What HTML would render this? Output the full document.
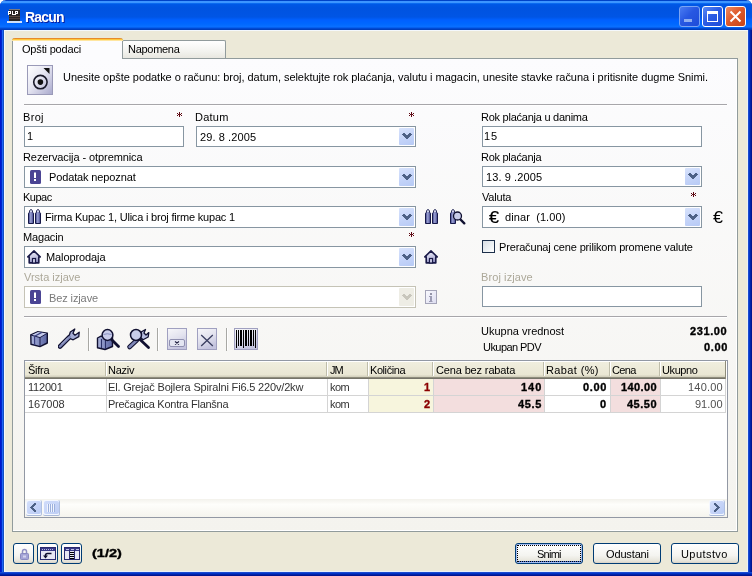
<!DOCTYPE html>
<html><head><meta charset="utf-8">
<style>
*{margin:0;padding:0;box-sizing:border-box}
html,body{width:752px;height:576px;overflow:hidden;background:#fff}
body{font-family:"Liberation Sans",sans-serif;font-size:11px;color:#000;position:relative}
.a{position:absolute}
.t{position:absolute;white-space:nowrap;line-height:13px;will-change:transform}
#win{position:absolute;left:0;top:0;width:752px;height:576px;border-radius:6px 6px 0 0;
 background:linear-gradient(90deg,#0018CF 0,#0018CF 1px,#0028C8 1px,#0028C8 2px,#1E64F8 2px,#1E64F8 3px,#1450C0 3px,#1450C0 4px,transparent 4px,transparent 748px,#1A4AD0 748px,#1A4AD0 749px,#0035C8 749px,#0035C8 750px,#0022A8 750px,#0022A8 751px,#001490 751px)}
#bot{position:absolute;left:0;top:572px;width:752px;height:4px;background:linear-gradient(#1A4AD0 0,#1A4AD0 1px,#0035C8 1px,#0035C8 2px,#0022A8 2px,#0022A8 3px,#001490 3px)}
#title{position:absolute;left:0;top:0;width:752px;height:30px;border-radius:6px 6px 0 0;
 background:linear-gradient(#0042C8 0px,#0042C8 1px,#3D95FF 1px,#3D95FF 3px,#0A6AF0 3px,#0A6AF0 4px,#0058E6 4px,#0053E0 8px,#0055E5 17px,#0060FF 20px,#0068FF 24px,#0A70FF 27px,#0050E0 28px,#0038B0 30px)}
#client{position:absolute;left:4px;top:30px;width:744px;height:542px;background:#ECE9D8;border:1px solid #F4F8FC;border-right-color:#E8F0F8;border-bottom-color:#E8F0F8}
.tb{position:absolute;top:6px;width:21px;height:21px;border:1px solid #fff;border-radius:3px}
.inp{position:absolute;height:21px;border:1px solid #8796A2;background:#fff}
.c22{height:22px}
.dis{border-color:#C5C3B6;background:#fff}
.ast{position:absolute;color:#800000;font-size:13px;font-weight:bold;line-height:13px}
.dd{position:absolute;right:1px;top:1px;width:15px;height:17px;border-radius:1px;
 background:linear-gradient(160deg,#D8E3FC,#C6D5F9 50%,#B7CAF5)}
.c22 .dd{height:18px}
.dd svg{position:absolute;left:3px;top:5px}
.c22 .dd svg{top:6px}
.ico{position:absolute}
.tbtn{position:absolute;top:543px;width:21px;height:21px;border:1px solid #003C74;border-radius:3px;background:linear-gradient(#FFFFFF,#F4F4F0 60%,#E6E4DA 90%,#D6D0C5)}
.btn{position:absolute;top:543px;height:21px;border:1px solid #003C74;border-radius:3px;background:linear-gradient(#FFFFFF,#F4F4F0 60%,#E6E4DA 90%,#D6D0C5)}
</style></head><body>
<svg width="0" height="0" style="position:absolute"><defs>
<linearGradient id="gcyl" x1="0" y1="0" x2="1" y2="0"><stop offset="0" stop-color="#3A3E88"/><stop offset="0.45" stop-color="#9EA4D4"/><stop offset="1" stop-color="#3A3E88"/></linearGradient>
<linearGradient id="ghouse" x1="0" y1="0" x2="0.3" y2="1"><stop offset="0" stop-color="#F4F4FC"/><stop offset="0.6" stop-color="#C8C8E4"/><stop offset="1" stop-color="#9090C0"/></linearGradient>
</defs></svg>
<div id="win"></div>
<div id="title"></div>
<div id="bot"></div>
<!-- title icon -->
<svg class="ico" style="left:7px;top:8px" width="15" height="15" shape-rendering="crispEdges">
 <rect x="2" y="1" width="11" height="12" fill="#2A2624"/>
 <rect x="2" y="1" width="11" height="1" fill="#7A7A80"/>
 <rect x="2" y="8" width="11" height="1" fill="#5A4A40"/><rect x="2" y="10" width="11" height="1" fill="#4A3E38"/>
 <g fill="#FFFFFF"><rect x="1" y="3" width="1" height="1"/><rect x="2" y="3" width="1" height="1"/><rect x="3" y="3" width="1" height="1"/><rect x="1" y="4" width="1" height="1"/><rect x="3" y="4" width="1" height="1"/><rect x="1" y="5" width="1" height="1"/><rect x="2" y="5" width="1" height="1"/><rect x="3" y="5" width="1" height="1"/><rect x="1" y="6" width="1" height="1"/><rect x="4.5" y="3" width="1" height="1"/><rect x="4.5" y="4" width="1" height="1"/><rect x="4.5" y="5" width="1" height="1"/><rect x="4.5" y="6" width="1" height="1"/><rect x="5.5" y="6" width="1" height="1"/><rect x="6.5" y="6" width="1" height="1"/><rect x="8" y="3" width="1" height="1"/><rect x="9" y="3" width="1" height="1"/><rect x="10" y="3" width="1" height="1"/><rect x="8" y="4" width="1" height="1"/><rect x="10" y="4" width="1" height="1"/><rect x="8" y="5" width="1" height="1"/><rect x="9" y="5" width="1" height="1"/><rect x="10" y="5" width="1" height="1"/><rect x="8" y="6" width="1" height="1"/></g>
 <rect x="0" y="13" width="15" height="2" fill="#D0E0F8"/>
</svg>
<!-- title buttons -->
<div class="tb" style="left:679px;border-color:#7AA4F4;background:linear-gradient(135deg,#4A7CF2,#2858E2 45%,#1E4CD8)"></div>
<div class="a" style="left:684px;top:19px;width:8px;height:3px;background:#8FAEF0"></div>
<div class="tb" style="left:702px;background:linear-gradient(135deg,#5A8AF6,#2C5CE4 45%,#1E4CD8)"></div>
<div class="a" style="left:707px;top:11px;width:11px;height:11px;border:1px solid #fff;border-top-width:3px"></div>
<div class="tb" style="left:725px;background:linear-gradient(135deg,#EE8A62,#DE5A2C 45%,#C84418)"></div>
<svg class="a" style="left:725px;top:6px" width="21" height="21"><path d="M5.5 5.5 L15.5 15.5 M15.5 5.5 L5.5 15.5" stroke="#fff" stroke-width="2"/></svg>
<div id="client"></div>
<!-- tab page -->
<div class="a" style="left:12px;top:58px;width:726px;height:474px;border:1px solid #919B9C;background:linear-gradient(#FCFCFE,#F4F3EE)"></div>
<div class="a" style="left:736px;top:59px;width:1px;height:472px;background:#fff"></div>
<div class="a" style="left:13px;top:530px;width:724px;height:1px;background:#fff"></div>
<!-- tabs -->
<div class="a" style="left:122px;top:40px;width:104px;height:18px;border:1px solid #919B9C;border-bottom:none;background:linear-gradient(#FFFFFF,#F3F3EF 60%,#E8E7E0);border-radius:2px 2px 0 0"></div>
<div class="a" style="left:12px;top:38px;width:111px;height:21px;border:1px solid #919B9C;border-bottom:none;border-top:none;background:#FCFCFE;border-radius:3px 3px 0 0"></div>
<div class="a" style="left:12px;top:38px;width:111px;height:3px;background:linear-gradient(#E68B2C 0,#E68B2C 1px,#FFC73C 1px,#FFC73C 2px,#FFE6A0 2px);border-radius:3px 3px 0 0"></div>

<!-- info icon -->
<svg class="ico" style="left:27px;top:65px" width="26" height="30">
 <defs><linearGradient id="gi" x1="0" y1="0" x2="1" y2="1"><stop offset="0" stop-color="#FFFFFF"/><stop offset="0.45" stop-color="#E6E6F2"/><stop offset="1" stop-color="#A8A8CC"/></linearGradient></defs>
 <rect x="0.5" y="0.5" width="25" height="29" fill="url(#gi)" stroke="#9A9AB8"/>
 <path d="M16.5 3 L22.5 3 L22.5 9 Z" fill="#111"/>
 <circle cx="13.4" cy="17.1" r="6.7" fill="none" stroke="#1A1A2A" stroke-width="1.6"/>
 <circle cx="13.4" cy="17.1" r="2.8" fill="#111"/>
</svg>
<div class="a" style="left:24px;top:104px;width:703px;height:1px;background:#A7A6AA"></div>
<div class="a" style="left:24px;top:105px;width:703px;height:1px;background:#FFFFFF"></div>

<!-- row 1 -->
<svg class="ico" style="left:177px;top:112px" width="5" height="5" shape-rendering="crispEdges" fill="#5E0812"><rect x="2" y="0" width="1" height="1"/><rect x="0" y="1" width="1" height="1"/><rect x="2" y="1" width="1" height="1"/><rect x="4" y="1" width="1" height="1"/><rect x="1" y="2" width="1" height="1"/><rect x="2" y="2" width="1" height="1"/><rect x="3" y="2" width="1" height="1"/><rect x="0" y="3" width="1" height="1"/><rect x="2" y="3" width="1" height="1"/><rect x="4" y="3" width="1" height="1"/><rect x="2" y="4" width="1" height="1"/></svg>
<div class="inp" style="left:24px;top:126px;width:160px"></div>
<svg class="ico" style="left:409px;top:112px" width="5" height="5" shape-rendering="crispEdges" fill="#5E0812"><rect x="2" y="0" width="1" height="1"/><rect x="0" y="1" width="1" height="1"/><rect x="2" y="1" width="1" height="1"/><rect x="4" y="1" width="1" height="1"/><rect x="1" y="2" width="1" height="1"/><rect x="2" y="2" width="1" height="1"/><rect x="3" y="2" width="1" height="1"/><rect x="0" y="3" width="1" height="1"/><rect x="2" y="3" width="1" height="1"/><rect x="4" y="3" width="1" height="1"/><rect x="2" y="4" width="1" height="1"/></svg>
<div class="inp" style="left:196px;top:126px;width:220px"><div class="dd"><svg width="10" height="6" shape-rendering="crispEdges" fill="#4D6185"><rect x="1" y="0" width="2" height="1"/><rect x="7" y="0" width="2" height="1"/><rect x="0" y="1" width="4" height="1"/><rect x="6" y="1" width="4" height="1"/><rect x="1" y="2" width="8" height="1"/><rect x="2" y="3" width="6" height="1"/><rect x="3" y="4" width="4" height="1"/><rect x="4" y="5" width="2" height="1"/></svg></div></div>
<div class="inp" style="left:482px;top:126px;width:220px"></div>

<!-- row 2 -->
<div class="inp c22" style="left:24px;top:166px;width:392px"><div class="dd"><svg width="10" height="6" shape-rendering="crispEdges" fill="#4D6185"><rect x="1" y="0" width="2" height="1"/><rect x="7" y="0" width="2" height="1"/><rect x="0" y="1" width="4" height="1"/><rect x="6" y="1" width="4" height="1"/><rect x="1" y="2" width="8" height="1"/><rect x="2" y="3" width="6" height="1"/><rect x="3" y="4" width="4" height="1"/><rect x="4" y="5" width="2" height="1"/></svg></div></div>
<svg class="ico" style="left:30px;top:170px" width="11" height="14"><rect x="0" y="0" width="11" height="14" rx="1.5" fill="#4A4494"/><rect x="4" y="2.5" width="2" height="5.5" fill="#fff"/><rect x="4" y="9" width="2" height="2" fill="#fff"/></svg>
<div class="inp" style="left:482px;top:166px;width:220px"><div class="dd"><svg width="10" height="6" shape-rendering="crispEdges" fill="#4D6185"><rect x="1" y="0" width="2" height="1"/><rect x="7" y="0" width="2" height="1"/><rect x="0" y="1" width="4" height="1"/><rect x="6" y="1" width="4" height="1"/><rect x="1" y="2" width="8" height="1"/><rect x="2" y="3" width="6" height="1"/><rect x="3" y="4" width="4" height="1"/><rect x="4" y="5" width="2" height="1"/></svg></div></div>

<!-- row 3 -->
<div class="inp c22" style="left:24px;top:206px;width:392px"><div class="dd"><svg width="10" height="6" shape-rendering="crispEdges" fill="#4D6185"><rect x="1" y="0" width="2" height="1"/><rect x="7" y="0" width="2" height="1"/><rect x="0" y="1" width="4" height="1"/><rect x="6" y="1" width="4" height="1"/><rect x="1" y="2" width="8" height="1"/><rect x="2" y="3" width="6" height="1"/><rect x="3" y="4" width="4" height="1"/><rect x="4" y="5" width="2" height="1"/></svg></div></div>
<svg class="ico" style="left:28px;top:209px" width="15" height="16"><path d="M1.5 3.2 Q1.5 0.6 3 0.6 Q4.5 0.6 4.5 3.2 L5.5 4.2 L5.5 14.5 L0.5 14.5 L0.5 4.2 Z" fill="url(#gcyl)" stroke="#161848" stroke-width="1"/><circle cx="3" cy="2.2" r="0.9" fill="#E8EAF8"/><path d="M8.5 3.2 Q8.5 0.6 10 0.6 Q11.5 0.6 11.5 3.2 L12.5 4.2 L12.5 14.5 L7.5 14.5 L7.5 4.2 Z" fill="url(#gcyl)" stroke="#161848" stroke-width="1"/><circle cx="10" cy="2.2" r="0.9" fill="#E8EAF8"/></svg>
<svg class="ico" style="left:425px;top:209px" width="15" height="16"><path d="M1.5 3.2 Q1.5 0.6 3 0.6 Q4.5 0.6 4.5 3.2 L5.5 4.2 L5.5 14.5 L0.5 14.5 L0.5 4.2 Z" fill="url(#gcyl)" stroke="#161848" stroke-width="1"/><circle cx="3" cy="2.2" r="0.9" fill="#E8EAF8"/><path d="M8.5 3.2 Q8.5 0.6 10 0.6 Q11.5 0.6 11.5 3.2 L12.5 4.2 L12.5 14.5 L7.5 14.5 L7.5 4.2 Z" fill="url(#gcyl)" stroke="#161848" stroke-width="1"/><circle cx="10" cy="2.2" r="0.9" fill="#E8EAF8"/></svg>
<svg class="ico" style="left:450px;top:209px" width="16" height="16"><path d="M1.5 3.2 Q1.5 0.6 3 0.6 Q4.5 0.6 4.5 3.2 L5.5 4.2 L5.5 14.5 L0.5 14.5 L0.5 4.2 Z" fill="url(#gcyl)" stroke="#161848" stroke-width="1"/><circle cx="3" cy="2.2" r="0.9" fill="#E8EAF8"/><path d="M9.5 9.5 L14.3 14.3" stroke="#101030" stroke-width="2.4" stroke-linecap="round"/><circle cx="7.5" cy="7" r="4" fill="#C8CCEA" stroke="#101030" stroke-width="1.3"/></svg>
<svg class="ico" style="left:691px;top:192px" width="5" height="5" shape-rendering="crispEdges" fill="#5E0812"><rect x="2" y="0" width="1" height="1"/><rect x="0" y="1" width="1" height="1"/><rect x="2" y="1" width="1" height="1"/><rect x="4" y="1" width="1" height="1"/><rect x="1" y="2" width="1" height="1"/><rect x="2" y="2" width="1" height="1"/><rect x="3" y="2" width="1" height="1"/><rect x="0" y="3" width="1" height="1"/><rect x="2" y="3" width="1" height="1"/><rect x="4" y="3" width="1" height="1"/><rect x="2" y="4" width="1" height="1"/></svg>
<div class="inp c22" style="left:482px;top:206px;width:220px"><div class="dd"><svg width="10" height="6" shape-rendering="crispEdges" fill="#4D6185"><rect x="1" y="0" width="2" height="1"/><rect x="7" y="0" width="2" height="1"/><rect x="0" y="1" width="4" height="1"/><rect x="6" y="1" width="4" height="1"/><rect x="1" y="2" width="8" height="1"/><rect x="2" y="3" width="6" height="1"/><rect x="3" y="4" width="4" height="1"/><rect x="4" y="5" width="2" height="1"/></svg></div></div>
<div class="t" style="left:489px;top:210px;font-size:15px;line-height:13px;-webkit-text-stroke:0.2px #000;transform:scale(1.2,1.1);transform-origin:0 0">€</div>
<div class="t" style="left:713px;top:210px;font-size:15px;line-height:13px;transform:scale(1.2,1.1);transform-origin:0 0">€</div>

<!-- row 4 -->
<svg class="ico" style="left:409px;top:232px" width="5" height="5" shape-rendering="crispEdges" fill="#5E0812"><rect x="2" y="0" width="1" height="1"/><rect x="0" y="1" width="1" height="1"/><rect x="2" y="1" width="1" height="1"/><rect x="4" y="1" width="1" height="1"/><rect x="1" y="2" width="1" height="1"/><rect x="2" y="2" width="1" height="1"/><rect x="3" y="2" width="1" height="1"/><rect x="0" y="3" width="1" height="1"/><rect x="2" y="3" width="1" height="1"/><rect x="4" y="3" width="1" height="1"/><rect x="2" y="4" width="1" height="1"/></svg>
<div class="inp c22" style="left:24px;top:246px;width:392px"><div class="dd"><svg width="10" height="6" shape-rendering="crispEdges" fill="#4D6185"><rect x="1" y="0" width="2" height="1"/><rect x="7" y="0" width="2" height="1"/><rect x="0" y="1" width="4" height="1"/><rect x="6" y="1" width="4" height="1"/><rect x="1" y="2" width="8" height="1"/><rect x="2" y="3" width="6" height="1"/><rect x="3" y="4" width="4" height="1"/><rect x="4" y="5" width="2" height="1"/></svg></div></div>
<svg class="ico" style="left:27px;top:250px" width="15" height="15"><path d="M7 0.9 L13.2 6.9 L11.8 6.9 L11.8 12.9 L2.2 12.9 L2.2 6.9 L0.8 6.9 Z" fill="url(#ghouse)" stroke="#1A1A48" stroke-width="1.6" stroke-linejoin="round"/><rect x="5.5" y="8.5" width="3" height="4.5" fill="#D8D8F0" stroke="#1A1A48" stroke-width="1.2"/></svg>
<svg class="ico" style="left:424px;top:250px" width="15" height="15"><path d="M7 0.9 L13.2 6.9 L11.8 6.9 L11.8 12.9 L2.2 12.9 L2.2 6.9 L0.8 6.9 Z" fill="url(#ghouse)" stroke="#1A1A48" stroke-width="1.6" stroke-linejoin="round"/><rect x="5.5" y="8.5" width="3" height="4.5" fill="#D8D8F0" stroke="#1A1A48" stroke-width="1.2"/></svg>
<div class="a" style="left:482px;top:240px;width:13px;height:13px;border:1px solid #1C2F4A;background:linear-gradient(135deg,#D8DEE4,#EEF2F4 60%,#FFFFFF)"></div>

<!-- row 5 -->
<div class="inp c22 dis" style="left:24px;top:286px;width:392px"><div class="dd" style="background:#EEEDE5"><svg width="10" height="6" shape-rendering="crispEdges" fill="#C8C6BC"><rect x="1" y="0" width="2" height="1"/><rect x="7" y="0" width="2" height="1"/><rect x="0" y="1" width="4" height="1"/><rect x="6" y="1" width="4" height="1"/><rect x="1" y="2" width="8" height="1"/><rect x="2" y="3" width="6" height="1"/><rect x="3" y="4" width="4" height="1"/><rect x="4" y="5" width="2" height="1"/></svg></div></div>
<svg class="ico" style="left:30px;top:290px" width="11" height="14"><rect x="0" y="0" width="11" height="14" rx="1.5" fill="#4A4494"/><rect x="4" y="2.5" width="2" height="5.5" fill="#fff"/><rect x="4" y="9" width="2" height="2" fill="#fff"/></svg>
<svg class="ico" style="left:425px;top:290px" width="12" height="14"><defs><linearGradient id="ginf" x1="0" y1="0" x2="1" y2="1"><stop offset="0" stop-color="#FAFAFE"/><stop offset="1" stop-color="#DCDCF0"/></linearGradient></defs><rect x="0.5" y="0.5" width="11" height="13" fill="url(#ginf)" stroke="#A4A4B8"/><rect x="5" y="3" width="2" height="2" fill="#9494A8"/><path d="M4 6h3v5h0.5v1h-3.5v-1h1v-4h-1z" fill="#9C9CB4"/></svg>
<div class="inp" style="left:482px;top:286px;width:220px"></div>

<div class="a" style="left:24px;top:316px;width:703px;height:1px;background:#A7A6AA"></div>
<div class="a" style="left:24px;top:317px;width:703px;height:1px;background:#FFFFFF"></div>

<!-- toolbar -->
<svg class="ico" style="left:30px;top:331px" width="19" height="17">
 <defs><linearGradient id="gbx" x1="0" y1="0" x2="1" y2="0"><stop offset="0" stop-color="#AEB6DC"/><stop offset="0.55" stop-color="#7C86BC"/><stop offset="1" stop-color="#5A64A0"/></linearGradient></defs>
 <path d="M0.8 4 L7.5 0.8 L17.3 2.2 L17.3 12 L10 15.6 L1 13.2 Z" fill="url(#gbx)" stroke="#101030" stroke-width="1.4" stroke-linejoin="round"/>
 <path d="M1.2 4.2 L10 6.6 L17 2.4 L8 1 Z" fill="#C4CAEA"/>
 <path d="M0.8 4 L10 6.6 L17.3 2.2 M10 6.6 L10 15.6" fill="none" stroke="#1A1C48" stroke-width="1"/>
 <path d="M4.6 5.2 L4.6 14.2 M4.6 5.2 L11.8 1.4" fill="none" stroke="#3A4080" stroke-width="1.2"/>
</svg>
<svg class="ico" style="left:58px;top:328px" width="23" height="22">
 <path d="M2 18.5 L11.5 9" stroke="#101030" stroke-width="4.6" stroke-linecap="round"/>
 <path d="M10.5 10 L12.3 4 L16.8 1 L15 5.2 L17 7.2 L21.2 4.2 L20.8 8.6 L15.2 11.8 Z" fill="#A4ACD4" stroke="#101030" stroke-width="1.3" stroke-linejoin="round"/>
 <path d="M2 18.5 L11.8 8.8" stroke="#8088B8" stroke-width="2.4" stroke-linecap="round"/>
 <path d="M3.5 16 L10 9.5" stroke="#B8C0E0" stroke-width="0.8"/>
</svg>
<div class="a" style="left:88px;top:328px;width:1px;height:23px;background:#A8A8A4"></div>
<div class="a" style="left:89px;top:328px;width:1px;height:22px;background:#FFFFFF"></div>
<svg class="ico" style="left:96px;top:328px" width="25" height="23">
 <path d="M1.5 10 L5 8.2 L16.5 9 L16.5 18.5 L9 21.5 L1.5 19.8 Z" fill="url(#gbx)" stroke="#101030" stroke-width="1.4" stroke-linejoin="round"/>
 <path d="M5.5 11v9 M9.5 11.5v9.5" stroke="#2A3068" stroke-width="1.1"/>
 <path d="M15 11 L22.5 18.5" stroke="#101030" stroke-width="2.8" stroke-linecap="round"/>
 <circle cx="11.5" cy="7" r="5.4" fill="#C8CCEA" stroke="#101030" stroke-width="1.5"/>
 <path d="M7.5 6.5 Q11 5 15.5 6.5" stroke="#8890C0" stroke-width="1" fill="none"/>
</svg>
<svg class="ico" style="left:126px;top:328px" width="25" height="23">
 <path d="M3.5 19 L11 12" stroke="#101030" stroke-width="4.6" stroke-linecap="round"/>
 <path d="M3.5 19 L11 12" stroke="#8088B8" stroke-width="2.4" stroke-linecap="round"/>
 <path d="M13 8 L15.5 3.8 L19.5 1.5 L18 5 L20 7 L22.8 4.6 L22.2 9 L17 11.8 Z" fill="#B8BEE0" stroke="#101030" stroke-width="1.3" stroke-linejoin="round"/>
 <path d="M14 11.5 L22.5 19.5" stroke="#101030" stroke-width="2.8" stroke-linecap="round"/>
 <circle cx="10" cy="7" r="5.5" fill="#C8CCEA" stroke="#101030" stroke-width="1.5"/>
</svg>
<div class="a" style="left:157px;top:328px;width:1px;height:23px;background:#A8A8A4"></div>
<div class="a" style="left:158px;top:328px;width:1px;height:22px;background:#FFFFFF"></div>
<svg class="ico" style="left:167px;top:328px" width="20" height="22"><defs><linearGradient id="gb" x1="0" y1="0" x2="0.4" y2="1"><stop offset="0" stop-color="#F8F8FA"/><stop offset="0.55" stop-color="#E2E2EE"/><stop offset="1" stop-color="#C4C4DE"/></linearGradient></defs><rect x="0.5" y="0.5" width="19" height="21" fill="url(#gb)" stroke="#A0A0C0"/><rect x="2.5" y="11.5" width="15" height="7" rx="1.5" fill="#E4E6F2" stroke="#9090B0"/><path d="M8 13.5 L12 16.5 M12 13.5 L8 16.5" stroke="#202040" stroke-width="1.1"/></svg>
<svg class="ico" style="left:197px;top:328px" width="20" height="22"><rect x="0.5" y="0.5" width="19" height="21" fill="url(#gb)" stroke="#A0A0C0"/><path d="M4.2 7 L15.8 18 M15.8 7 L4.2 18" stroke="#3A3E60" stroke-width="1.3"/></svg>
<div class="a" style="left:226px;top:328px;width:1px;height:23px;background:#A8A8A4"></div>
<div class="a" style="left:227px;top:328px;width:1px;height:22px;background:#FFFFFF"></div>
<svg class="ico" style="left:234px;top:328px" width="24" height="22"><rect x="0.5" y="0.5" width="23" height="21" fill="url(#gb)" stroke="#A0A0C0"/>
 <g fill="#000"><rect x="2" y="2" width="1" height="18"/><rect x="4" y="2" width="1" height="16"/><rect x="6" y="2" width="2" height="16"/><rect x="9" y="2" width="1" height="18"/><rect x="11" y="2" width="2" height="16"/><rect x="14" y="2" width="1" height="16"/><rect x="16" y="2" width="2" height="16"/><rect x="19" y="2" width="1" height="16"/><rect x="21" y="2" width="1" height="18"/></g></svg>

<!-- grid -->
<div class="a" style="left:24px;top:360px;width:704px;height:158px;border:1px solid #9298A4;background:#fff"></div>
<div class="a" style="left:25px;top:361px;width:701px;height:18px;background:linear-gradient(#FFFFFF 0,#FFFFFF 1px,#F0EEDE 1px,#E9E6D3 14px,#D6D3C0 15px,#D6D3C0 16px,#8E8C7C 16px,#8E8C7C 17px,#76746A 17px)"></div>
<div class="a" style="left:725px;top:361px;width:1px;height:18px;background:#8E8C7A"></div>
<!-- col backgrounds -->
<div class="a" style="left:369px;top:379px;width:64px;height:33px;background:#F7F5DD"></div>
<div class="a" style="left:434px;top:379px;width:110px;height:33px;background:#F3DEDE"></div>
<div class="a" style="left:611px;top:379px;width:49px;height:33px;background:#F3DEDE"></div>
<!-- header dividers -->
<div class="a" style="left:105px;top:362px;width:1px;height:14px;background:#BFBDAA"></div><div class="a" style="left:106px;top:362px;width:1px;height:14px;background:#fff"></div>
<div class="a" style="left:326px;top:362px;width:1px;height:14px;background:#BFBDAA"></div><div class="a" style="left:327px;top:362px;width:1px;height:14px;background:#fff"></div>
<div class="a" style="left:367px;top:362px;width:1px;height:14px;background:#BFBDAA"></div><div class="a" style="left:368px;top:362px;width:1px;height:14px;background:#fff"></div>
<div class="a" style="left:432px;top:362px;width:1px;height:14px;background:#BFBDAA"></div><div class="a" style="left:433px;top:362px;width:1px;height:14px;background:#fff"></div>
<div class="a" style="left:543px;top:362px;width:1px;height:14px;background:#BFBDAA"></div><div class="a" style="left:544px;top:362px;width:1px;height:14px;background:#fff"></div>
<div class="a" style="left:609px;top:362px;width:1px;height:14px;background:#BFBDAA"></div><div class="a" style="left:610px;top:362px;width:1px;height:14px;background:#fff"></div>
<div class="a" style="left:659px;top:362px;width:1px;height:14px;background:#BFBDAA"></div><div class="a" style="left:660px;top:362px;width:1px;height:14px;background:#fff"></div>
<!-- grid lines -->
<div class="a" style="left:25px;top:395px;width:701px;height:1px;background:#D4D4D4"></div>
<div class="a" style="left:25px;top:412px;width:701px;height:1px;background:#D4D4D4"></div>
<div class="a" style="left:106px;top:379px;width:1px;height:33px;background:#D4D4D4"></div>
<div class="a" style="left:327px;top:379px;width:1px;height:33px;background:#D4D4D4"></div>
<div class="a" style="left:368px;top:379px;width:1px;height:33px;background:#D4D4D4"></div>
<div class="a" style="left:433px;top:379px;width:1px;height:33px;background:#D4D4D4"></div>
<div class="a" style="left:544px;top:379px;width:1px;height:33px;background:#D4D4D4"></div>
<div class="a" style="left:610px;top:379px;width:1px;height:33px;background:#D4D4D4"></div>
<div class="a" style="left:660px;top:379px;width:1px;height:33px;background:#D4D4D4"></div>
<div class="a" style="left:725px;top:379px;width:1px;height:33px;background:#D4D4D4"></div>

<!-- scrollbar -->
<div class="a" style="left:25px;top:499px;width:702px;height:18px;background:linear-gradient(#F3F2EC,#FEFEFB 30%,#F5F4EE 100%)"></div>
<div class="a" style="left:26px;top:500px;width:16px;height:16px;border-radius:2px;background:#F4F7FE;border-right:1px solid #B0C0E0;border-bottom:1px solid #A8B8D8"></div>
<div class="a" style="left:27px;top:501px;width:14px;height:13px;border-radius:2px;background:linear-gradient(135deg,#D4E0FC,#C6D4F8 50%,#B8CAF4)"></div>
<svg class="ico" style="left:30px;top:503px" width="6" height="9" shape-rendering="crispEdges" fill="#4D6185"><rect x="4" y="0" width="2" height="1"/><rect x="3" y="1" width="3" height="1"/><rect x="2" y="2" width="3" height="1"/><rect x="1" y="3" width="3" height="1"/><rect x="0" y="4" width="3" height="1"/><rect x="1" y="5" width="3" height="1"/><rect x="2" y="6" width="3" height="1"/><rect x="3" y="7" width="3" height="1"/><rect x="4" y="8" width="2" height="1"/></svg>
<div class="a" style="left:43px;top:500px;width:17px;height:16px;border-radius:2px;background:#F4F7FE;border-right:1px solid #B0C0E0;border-bottom:1px solid #A8B8D8"></div>
<div class="a" style="left:44px;top:501px;width:15px;height:13px;border-radius:2px;background:linear-gradient(135deg,#D0DCFA,#C8D6F8 50%,#BCCCF4)"></div>
<svg class="ico" style="left:47px;top:504px" width="8" height="8" shape-rendering="crispEdges"><g fill="#F0F4FE"><rect x="0" y="0" width="1" height="8"/><rect x="2" y="0" width="1" height="8"/><rect x="4" y="0" width="1" height="8"/><rect x="6" y="0" width="1" height="8"/></g><g fill="#9CB0DC"><rect x="1" y="0" width="1" height="8"/><rect x="3" y="0" width="1" height="8"/><rect x="5" y="0" width="1" height="8"/><rect x="7" y="0" width="1" height="8"/></g></svg>
<div class="a" style="left:709px;top:500px;width:16px;height:16px;border-radius:2px;background:#F4F7FE;border-right:1px solid #B0C0E0;border-bottom:1px solid #A8B8D8"></div>
<div class="a" style="left:710px;top:501px;width:14px;height:13px;border-radius:2px;background:linear-gradient(135deg,#D4E0FC,#C6D4F8 50%,#B8CAF4)"></div>
<svg class="ico" style="left:714px;top:503px" width="6" height="9" shape-rendering="crispEdges" fill="#4D6185"><rect x="0" y="0" width="2" height="1"/><rect x="0" y="1" width="3" height="1"/><rect x="1" y="2" width="3" height="1"/><rect x="2" y="3" width="3" height="1"/><rect x="3" y="4" width="3" height="1"/><rect x="2" y="5" width="3" height="1"/><rect x="1" y="6" width="3" height="1"/><rect x="0" y="7" width="3" height="1"/><rect x="0" y="8" width="2" height="1"/></svg>

<!-- bottom -->
<div class="tbtn" style="left:13px"></div>
<svg class="ico" style="left:19px;top:548px" width="11" height="13">
 <path d="M3.5 5.5 V3.6 a2 2 0 0 1 4 0 V5.5" fill="none" stroke="#9090C4" stroke-width="1.5"/>
 <rect x="1.5" y="5.5" width="8" height="6" rx="0.8" fill="#A4A4D6" stroke="#8A8AC0" stroke-width="1"/>
 <rect x="4" y="7.5" width="3" height="2" fill="#D4D4EE"/>
</svg>
<div class="tbtn" style="left:37px"></div>
<svg class="ico" style="left:40px;top:547px" width="16" height="13">
 <rect x="0.5" y="0.5" width="15" height="12" fill="#E6E6F4" stroke="#2A2A70"/>
 <rect x="1" y="1" width="14" height="3" fill="#3A3A88"/>
 <path d="M2 2.5h1 M4 2.5h1 M6 2.5h1 M8 2.5h1 M10 2.5h1 M12 2.5h1" stroke="#B8B8E4" stroke-width="1"/>
 <path d="M11.5 6.5 H7.5 Q5.5 6.5 5.5 8.5 V9" fill="none" stroke="#101030" stroke-width="1.6"/>
 <path d="M3 8.5 H8 L5.5 11.5 Z" fill="#101030"/>
</svg>
<div class="tbtn" style="left:61px"></div>
<svg class="ico" style="left:64px;top:547px" width="16" height="13" shape-rendering="crispEdges">
 <rect x="0.5" y="0.5" width="15" height="12" fill="#E6E6F4" stroke="#2A2A70"/>
 <rect x="1" y="1" width="14" height="3" fill="#3A3A88"/>
 <path d="M2 2.5h3 M7 2.5h3 M12 2.5h3" stroke="#C0C0E8" stroke-width="1"/>
 <rect x="5" y="3" width="1" height="9" fill="#2A2A70"/><rect x="10" y="3" width="1" height="9" fill="#2A2A70"/>
 <rect x="6" y="5" width="4" height="1" fill="#000"/><rect x="6" y="7" width="4" height="1" fill="#000"/><rect x="6" y="9" width="4" height="1" fill="#000"/><rect x="6" y="11" width="4" height="1" fill="#000"/>
</svg>

<div class="btn" style="left:515px;width:68px;box-shadow:inset 0 0 0 1px #A6BEF2, inset 0 -1px 0 1px #4A78DC"></div>
<div class="a" style="left:517px;top:545px;width:64px;height:17px;border:1px dotted #000"></div>
<div class="btn" style="left:593px;width:68px"></div>
<div class="btn" style="left:671px;width:68px"></div>
<div class="t" style="left:25px;top:11px;letter-spacing:-0.8px;color:#fff;font-weight:bold;font-size:14px;line-height:13px;text-shadow:1px 1px 0 #0A1E9E">Racun</div>
<div class="t" style="left:22px;top:43px;letter-spacing:-0.182px;">Opšti podaci</div>
<div class="t" style="left:128px;top:43px;letter-spacing:-0.286px;">Napomena</div>
<div class="t" style="left:63px;top:71px;letter-spacing:-0.037px;">Unesite opšte podatke o računu: broj, datum, selektujte rok plaćanja, valutu i magacin, unesite stavke računa i pritisnite dugme Snimi.</div>
<div class="t" style="left:23px;top:111px;letter-spacing:0.333px;">Broj</div>
<div class="t" style="left:195px;top:111px;letter-spacing:0.25px;">Datum</div>
<div class="t" style="left:481px;top:111px;letter-spacing:-0.25px;">Rok plaćanja u danima</div>
<div class="t" style="left:27px;top:130px;">1</div>
<div class="t" style="left:200px;top:131px;letter-spacing:0.1px;">29. 8 .2005</div>
<div class="t" style="left:484px;top:130px;letter-spacing:1.0px;">15</div>
<div class="t" style="left:23px;top:151px;letter-spacing:-0.087px;">Rezervacija - otpremnica</div>
<div class="t" style="left:49px;top:171px;letter-spacing:-0.133px;">Podatak nepoznat</div>
<div class="t" style="left:481px;top:151px;letter-spacing:-0.273px;">Rok plaćanja</div>
<div class="t" style="left:486px;top:171px;letter-spacing:0.1px;">13. 9 .2005</div>
<div class="t" style="left:23px;top:191px;letter-spacing:-0.5px;">Kupac</div>
<div class="t" style="left:45px;top:211px;letter-spacing:-0.2px;">Firma Kupac 1, Ulica i broj firme kupac 1</div>
<div class="t" style="left:482px;top:191px;letter-spacing:-0.2px;">Valuta</div>
<div class="t" style="left:505px;top:211px;letter-spacing:0.083px;">dinar  (1.00)</div>
<div class="t" style="left:23px;top:231px;letter-spacing:-0.167px;">Magacin</div>
<div class="t" style="left:46px;top:251px;letter-spacing:-0.1px;">Maloprodaja</div>
<div class="t" style="left:499px;top:241px;letter-spacing:-0.158px;">Preračunaj cene prilikom promene valute</div>
<div class="t" style="left:24px;top:271px;color:#ACA899">Vrsta izjave</div>
<div class="t" style="left:49px;top:292px;letter-spacing:-0.111px;color:#7A7A7A">Bez izjave</div>
<div class="t" style="left:481px;top:271px;letter-spacing:0.1px;color:#ACA899">Broj izjave</div>
<div class="t" style="left:481px;top:325px;">Ukupna vrednost</div>
<div class="t" style="left:483px;top:341px;letter-spacing:-0.556px;">Ukupan PDV</div>
<div class="t" style="left:690px;top:325px;letter-spacing:0.6px;font-weight:bold;-webkit-text-stroke:0.35px currentColor">231.00</div>
<div class="t" style="left:704px;top:341px;letter-spacing:0.667px;font-weight:bold;-webkit-text-stroke:0.35px currentColor">0.00</div>
<div class="t" style="left:28px;top:364px;letter-spacing:-0.25px;">Šifra</div>
<div class="t" style="left:108px;top:364px;letter-spacing:-0.25px;">Naziv</div>
<div class="t" style="left:330px;top:364px;letter-spacing:-1.0px;">JM</div>
<div class="t" style="left:370px;top:364px;letter-spacing:-0.429px;">Količina</div>
<div class="t" style="left:436px;top:364px;letter-spacing:-0.143px;">Cena bez rabata</div>
<div class="t" style="left:546px;top:364px;letter-spacing:0.375px;">Rabat (%)</div>
<div class="t" style="left:612px;top:364px;letter-spacing:-0.667px;">Cena</div>
<div class="t" style="left:662px;top:364px;letter-spacing:-0.4px;">Ukupno</div>
<div class="t" style="left:28px;top:381px;letter-spacing:-0.2px;color:#333">112001</div>
<div class="t" style="left:108px;top:381px;letter-spacing:-0.171px;color:#333">El. Grejač Bojlera Spiralni Fi6.5 220v/2kw</div>
<div class="t" style="left:330px;top:381px;letter-spacing:-0.5px;color:#333">kom</div>
<div class="t" style="left:424px;top:381px;color:#8B0000;font-weight:bold;-webkit-text-stroke:0.35px currentColor">1</div>
<div class="t" style="left:521px;top:381px;letter-spacing:1.0px;font-weight:bold;-webkit-text-stroke:0.35px currentColor">140</div>
<div class="t" style="left:583px;top:381px;letter-spacing:0.667px;font-weight:bold;-webkit-text-stroke:0.35px currentColor">0.00</div>
<div class="t" style="left:621px;top:381px;letter-spacing:0.4px;font-weight:bold;-webkit-text-stroke:0.35px currentColor">140.00</div>
<div class="t" style="left:688px;top:381px;letter-spacing:0.2px;color:#505050">140.00</div>
<div class="t" style="left:28px;top:398px;color:#333">167008</div>
<div class="t" style="left:108px;top:398px;letter-spacing:-0.261px;color:#333">Prečagica Kontra Flanšna</div>
<div class="t" style="left:330px;top:398px;letter-spacing:-0.5px;color:#333">kom</div>
<div class="t" style="left:424px;top:398px;color:#8B0000;font-weight:bold;-webkit-text-stroke:0.35px currentColor">2</div>
<div class="t" style="left:518px;top:398px;letter-spacing:0.667px;font-weight:bold;-webkit-text-stroke:0.35px currentColor">45.5</div>
<div class="t" style="left:600px;top:398px;font-weight:bold;-webkit-text-stroke:0.35px currentColor">0</div>
<div class="t" style="left:627px;top:398px;letter-spacing:0.5px;font-weight:bold;-webkit-text-stroke:0.35px currentColor">45.50</div>
<div class="t" style="left:695px;top:398px;color:#505050">91.00</div>
<div class="t" style="left:92px;top:547px;transform:scaleX(1.32);transform-origin:0 50%;font-weight:bold;-webkit-text-stroke:0.35px currentColor">(1/2)</div>
<div class="t" style="left:537px;top:548px;letter-spacing:-0.75px;">Snimi</div>
<div class="t" style="left:606px;top:548px;letter-spacing:-0.143px;">Odustani</div>
<div class="t" style="left:681px;top:548px;letter-spacing:0.429px;">Uputstvo</div>
</body></html>
